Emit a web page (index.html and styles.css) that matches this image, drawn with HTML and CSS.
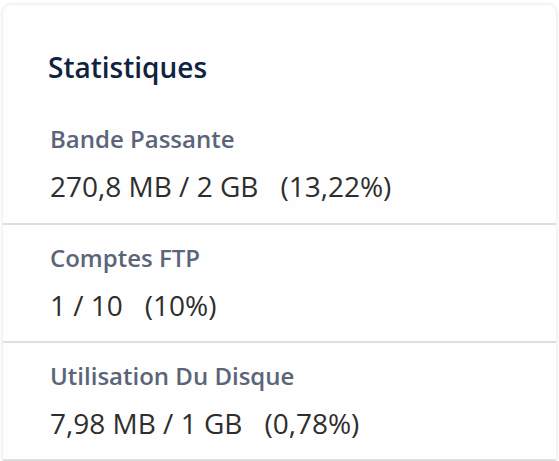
FILE: index.html
```html
<!DOCTYPE html>
<html lang="fr">
<head>
<meta charset="utf-8">
<title>Statistiques</title>
<link rel="stylesheet" href="styles.css">
</head>
<body>
<div class="card">
  <h2 class="card-title">Statistiques</h2>
  <div class="stat stat-first">
    <div class="stat-label">Bande Passante</div>
    <div class="stat-value">270,8 MB / 2 GB<span class="pct">(13,22%)</span></div>
  </div>
  <div class="stat">
    <div class="stat-label">Comptes FTP</div>
    <div class="stat-value">1 / 10<span class="pct">(10%)</span></div>
  </div>
  <div class="stat stat-last">
    <div class="stat-label">Utilisation Du Disque</div>
    <div class="stat-value">7,98 MB / 1 GB<span class="pct">(0,78%)</span></div>
  </div>
</div>
</body>
</html>
```
FILE: styles.css
```css
html, body {
  margin: 0;
  background: #ffffff;
}
body {
  padding: 5px 3px 0 3px;
  font-family: "Open Sans", "Liberation Sans", sans-serif;
}
.card {
  background: #fefefe;
  border-radius: 8px 8px 0 0;
  box-shadow: 0 0 4px rgba(0, 0, 0, 0.14);
  border-bottom: 2px solid #dedede;
}
.card-title {
  margin: 0;
  padding: 44px 0 0 45px;
  font-size: 28px;
  font-weight: 600;
  color: #0f2341;
  line-height: 36px;
}
.stat {
  padding: 17px 0 18px 47px;
  border-bottom: 2px solid #dedede;
}
.stat-first {
  padding-top: 38px;
  padding-bottom: 19px;
}
.stat-last {
  border-bottom: none;
}
.stat-label {
  font-size: 24px;
  font-weight: 600;
  color: #5b6579;
  line-height: 32px;
}
.stat-value {
  margin-top: 13px;
  font-size: 28px;
  color: #2e2e2e;
  line-height: 36px;
}
.pct {
  margin-left: 22px;
}
```
